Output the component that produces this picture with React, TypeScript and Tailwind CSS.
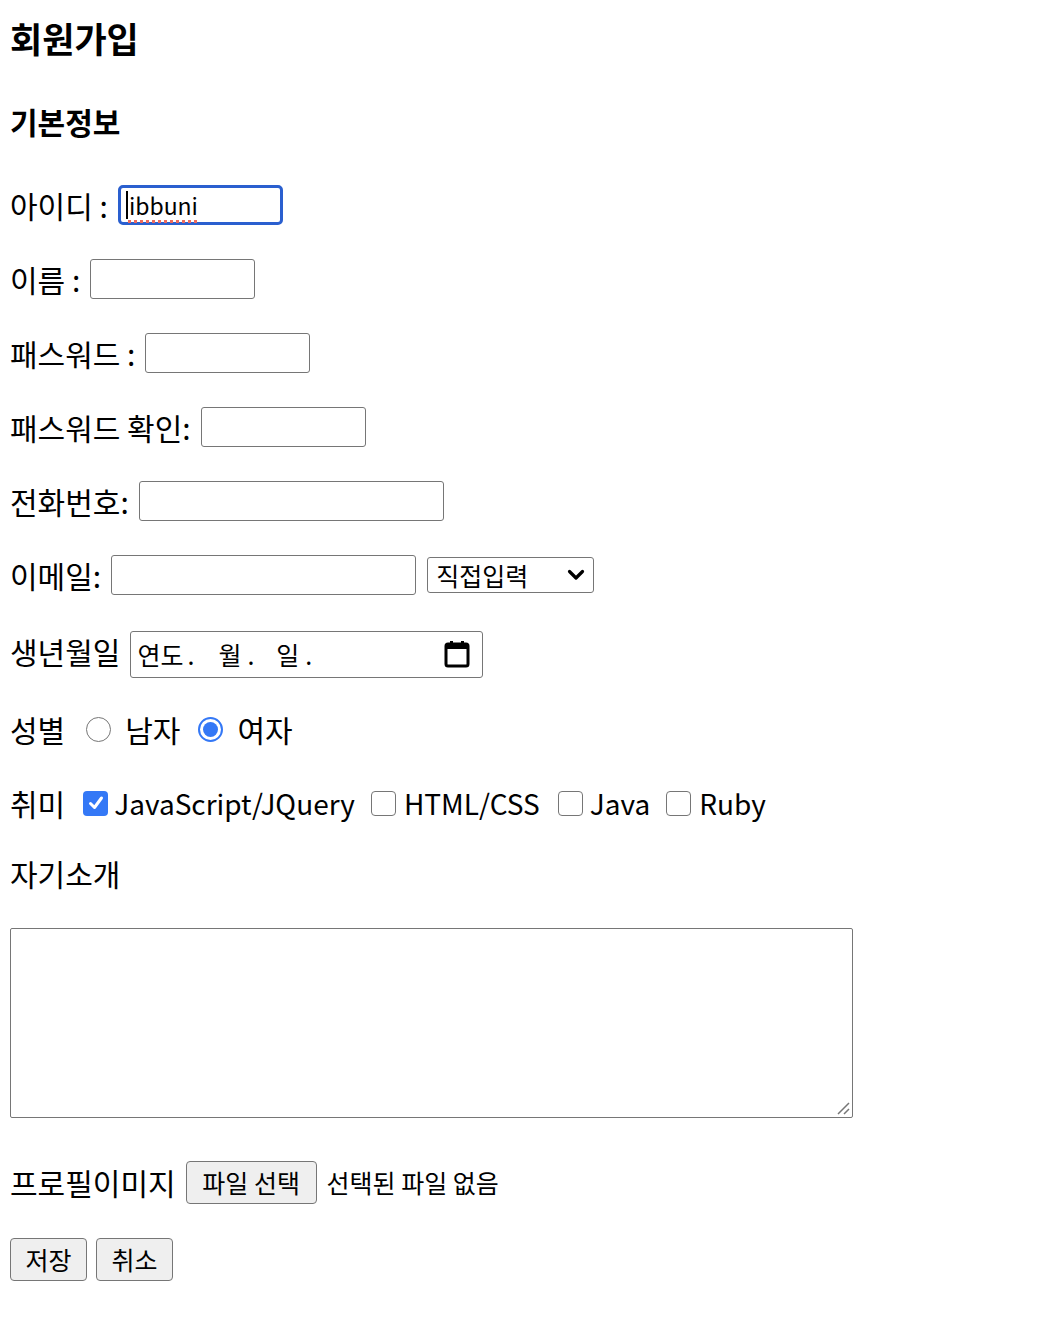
import React from "react";

const font = { fontFamily: '"Noto Sans CJK KR", "Noto Sans", sans-serif' };

function Field({ w, focused, children }: { w: string; focused?: boolean; children?: React.ReactNode }) {
  return (
    <div
      className={`${w} h-[40px] flex items-center px-[6px] text-[23px] leading-none ${
        focused ? "border-[3px] border-[#2a5fcf] rounded-[5px]" : "border border-[#767676] rounded-[3px]"
      }`}
    >
      {children}
    </div>
  );
}

function Row({ h = "h-[74px]", children }: { h?: string; children: React.ReactNode }) {
  return <div className={`${h} flex items-center text-[30px] leading-none`}>{children}</div>;
}

function Radio({ checked }: { checked?: boolean }) {
  return checked ? (
    <span className="block w-[25px] h-[25px] rounded-full border-[2px] border-[#3478f6] flex items-center justify-center">
      <span className="block w-[15px] h-[15px] rounded-full bg-[#3478f6]" />
    </span>
  ) : (
    <span className="block w-[25px] h-[25px] rounded-full border-[1.5px] border-[#767676]" />
  );
}

function Check({ checked }: { checked?: boolean }) {
  return checked ? (
    <span className="block w-[25px] h-[25px] rounded-[4px] bg-[#3478f6] flex items-center justify-center">
      <svg width="18" height="18" viewBox="0 0 18 18" fill="none">
        <path d="M3.5 9.5 L7.5 13.5 L14.5 4" stroke="white" strokeWidth="3" strokeLinecap="round" strokeLinejoin="round" />
      </svg>
    </span>
  ) : (
    <span className="block w-[25px] h-[25px] rounded-[4px] border-[1.5px] border-[#767676]" />
  );
}

export default function App() {
  return (
    <div className="bg-white text-black pl-[10px] min-h-[1318px]" style={font}>
      <div className="h-[74px] flex items-center">
        <h3 className="text-[35px] font-bold leading-none">회원가입</h3>
      </div>
      <div className="h-[94px] flex items-center">
        <h4 className="text-[30px] font-bold leading-none">기본정보</h4>
      </div>

      <Row>
        <span className="mr-[10px]">아이디 :</span>
        <Field w="w-[165px]" focused>
          <span className="w-[2px] h-[28px] bg-black mr-[1px] -ml-[1px]" />
          <span className="underline decoration-dotted decoration-[#ec6a5c] decoration-[3px] underline-offset-[5px]">ibbuni</span>
        </Field>
      </Row>
      <Row>
        <span className="mr-[10px]">이름 :</span>
        <Field w="w-[165px]" />
      </Row>
      <Row>
        <span className="mr-[10px]">패스워드 :</span>
        <Field w="w-[165px]" />
      </Row>
      <Row>
        <span className="mr-[10px]">패스워드 확인:</span>
        <Field w="w-[165px]" />
      </Row>
      <Row>
        <span className="mr-[10px]">전화번호:</span>
        <Field w="w-[305px]" />
      </Row>
      <Row>
        <span className="mr-[10px]">이메일:</span>
        <Field w="w-[305px]" />
        <div className="ml-[11px] w-[167px] h-[36px] border border-[#767676] rounded-[3px] flex items-center justify-between pl-[8px] pr-[8px] text-[25px]">
          <span>직접입력</span>
          <svg width="18" height="12" viewBox="0 0 18 12" fill="none">
            <path d="M2.5 2.5 L9 9 L15.5 2.5" stroke="black" strokeWidth="3.2" strokeLinecap="round" strokeLinejoin="round" />
          </svg>
        </div>
      </Row>
      <Row h="h-[78px]">
        <span className="mr-[10px]">생년월일</span>
        <div className="w-[353px] h-[47px] border border-[#767676] rounded-[3px] flex items-center justify-between pl-[6px] pr-[12px] text-[25px] mt-[6px]">
          <span className="flex items-center">
            <span>연도</span>
            <span className="ml-[4px]">.</span>
            <span className="ml-[24px]">월</span>
            <span className="ml-[6px]">.</span>
            <span className="ml-[22px]">일</span>
            <span className="ml-[6px]">.</span>
          </span>
          <svg width="26" height="28" viewBox="0 0 26 28" fill="none">
            <rect x="2" y="4" width="22" height="22" rx="2" stroke="black" strokeWidth="3" />
            <rect x="2" y="4" width="22" height="5" fill="black" />
            <rect x="6" y="1" width="3" height="5" fill="black" />
            <rect x="17" y="1" width="3" height="5" fill="black" />
          </svg>
        </div>
      </Row>
      <Row h="h-[78px]">
        <span>성별</span>
        <span className="ml-[21px] mr-[14px]"><Radio /></span>
        <span>남자</span>
        <span className="ml-[18px] mr-[14px]"><Radio checked /></span>
        <span>여자</span>
      </Row>
      <Row h="h-[70px]">
        <span>취미</span>
        <span className="ml-[18px] mr-[6px]"><Check checked /></span>
        <span className="text-[28px]">JavaScript/JQuery</span>
        <span className="ml-[16px] mr-[8px]"><Check /></span>
        <span className="text-[28px]">HTML/CSS</span>
        <span className="ml-[18px] mr-[7px]"><Check /></span>
        <span className="text-[28px]">Java</span>
        <span className="ml-[16px] mr-[8px]"><Check /></span>
        <span className="text-[28px]">Ruby</span>
      </Row>
      <Row h="h-[70px]">
        <span>자기소개</span>
      </Row>

      <div className="mt-[20px] w-[843px] h-[190px] border border-[#767676] rounded-[2px] flex items-end justify-end p-[2px]">
        <svg width="14" height="14" viewBox="0 0 14 14">
          <path d="M2 13 L13 2 M8 13 L13 8" stroke="#767676" strokeWidth="1.5" />
        </svg>
      </div>

      <div className="mt-[30px] h-[68px] flex items-center text-[30px] leading-none">
        <span className="mr-[10px]">프로필이미지</span>
        <div className="w-[131px] h-[43px] bg-[#efefef] border border-[#767676] rounded-[4px] flex items-center justify-center text-[25px]">
          파일 선택
        </div>
        <span className="ml-[10px] text-[25px]">선택된 파일 없음</span>
      </div>

      <div className="mt-[22px] flex gap-[9px]">
        <div className="w-[77px] h-[43px] bg-[#efefef] border border-[#767676] rounded-[4px] flex items-center justify-center text-[25px]">
          저장
        </div>
        <div className="w-[77px] h-[43px] bg-[#efefef] border border-[#767676] rounded-[4px] flex items-center justify-center text-[25px]">
          취소
        </div>
      </div>
    </div>
  );
}
